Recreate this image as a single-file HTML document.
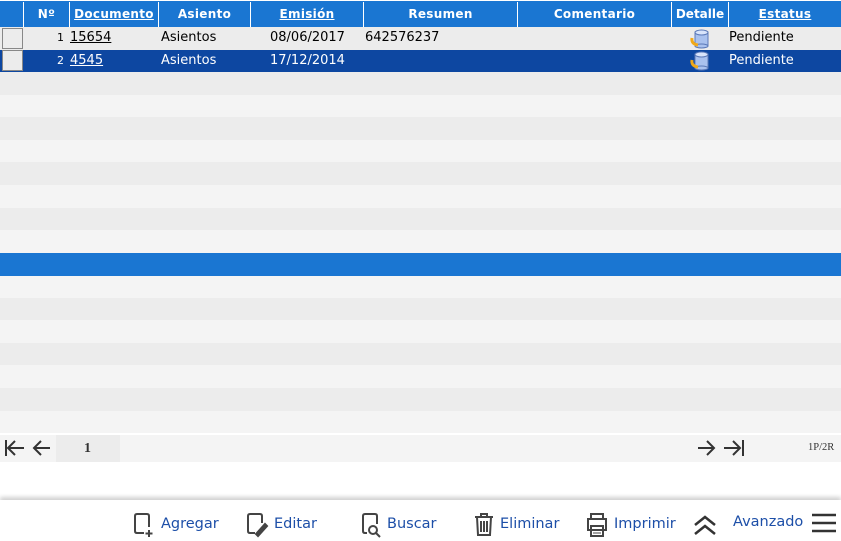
<!DOCTYPE html>
<html><head><meta charset="utf-8"><style>
*{margin:0;padding:0;box-sizing:border-box}
body{width:841px;height:541px;overflow:hidden;background:#fff;font-family:"DejaVu Sans","Liberation Sans",sans-serif;position:relative}
.hdr{position:absolute;top:0;left:0;width:841px;height:27px;background:#1a76d2;border-top:1px solid #fff}
.hc{position:absolute;top:1px;height:25px;line-height:24px;color:#fff;font-weight:bold;font-size:12px;letter-spacing:0.3px;text-align:center;border-left:1px solid #fff}
.hc u{text-decoration:underline}
.row{position:absolute;left:0;width:841px}
.c{position:absolute;font-size:13px;line-height:22px;color:#000;white-space:nowrap}
.cb{position:absolute;left:2px;width:21px;height:21px;background:#ececec;border:1px solid #888}
.sel .c{color:#fff}
.ft{position:absolute;top:500px;left:0;width:841px;height:41px;background:#fff;box-shadow:0 -3px 4px rgba(0,0,0,.18)}
.btn{position:absolute;top:514px;font-family:"DejaVu Sans",sans-serif;font-size:14.5px;color:#1d4fa8;line-height:20px}
svg{position:absolute}
</style></head><body>
<div class="hdr">
<div class="hc" style="left:23px;width:46px">Nº</div>
<div class="hc" style="left:69px;width:89px"><u>Documento</u></div>
<div class="hc" style="left:158px;width:92px">Asiento</div>
<div class="hc" style="left:250px;width:113px"><u>Emisión</u></div>
<div class="hc" style="left:363px;width:154px">Resumen</div>
<div class="hc" style="left:517px;width:154px">Comentario</div>
<div class="hc" style="left:671px;width:57px;letter-spacing:0">Detalle</div>
<div class="hc" style="left:728px;width:113px"><u>Estatus</u></div>
</div>
<div class="row" style="top:27px;height:23px;background:#ececec">
<div class="cb" style="top:1px"></div>
<div class="c" style="left:57px;font-size:11px">1</div>
<div class="c" style="left:70px"><u>15654</u></div>
<div class="c" style="left:161px">Asientos</div>
<div class="c" style="left:270px">08/06/2017</div>
<div class="c" style="left:365px">642576237</div>
<div class="c" style="left:729px">Pendiente</div>
</div>
<div class="row sel" style="top:50px;height:22px;background:#0d47a1">
<div class="cb" style="top:0px"></div>
<div class="c" style="left:57px;font-size:11px">2</div>
<div class="c" style="left:70px"><u>4545</u></div>
<div class="c" style="left:161px">Asientos</div>
<div class="c" style="left:270px">17/12/2014</div>
<div class="c" style="left:729px">Pendiente</div>
</div>
<svg style="left:689px;top:29px" width="22" height="20" viewBox="0 0 22 20"><rect x="6" y="3" width="13" height="14" fill="#a9c1ee" stroke="#5b79b8"/><ellipse cx="12.5" cy="3.5" rx="6.5" ry="2.5" fill="#d8e4fb" stroke="#5b79b8"/><ellipse cx="12.5" cy="17" rx="6.5" ry="2" fill="#a9c1ee" stroke="#5b79b8"/><path d="M3 9 Q2 15 9 16" stroke="#f0a818" stroke-width="3" fill="none"/></svg>
<svg style="left:689px;top:51px" width="22" height="20" viewBox="0 0 22 20"><rect x="6" y="3" width="13" height="14" fill="#a9c1ee" stroke="#5b79b8"/><ellipse cx="12.5" cy="3.5" rx="6.5" ry="2.5" fill="#d8e4fb" stroke="#5b79b8"/><ellipse cx="12.5" cy="17" rx="6.5" ry="2" fill="#a9c1ee" stroke="#5b79b8"/><path d="M3 9 Q2 15 9 16" stroke="#f0a818" stroke-width="3" fill="none"/></svg>
<div class="row" style="top:72px;height:23px;background:#ececec"></div>
<div class="row" style="top:95px;height:22px;background:#f4f4f4"></div>
<div class="row" style="top:117px;height:23px;background:#ececec"></div>
<div class="row" style="top:140px;height:22px;background:#f4f4f4"></div>
<div class="row" style="top:162px;height:23px;background:#ececec"></div>
<div class="row" style="top:185px;height:23px;background:#f4f4f4"></div>
<div class="row" style="top:208px;height:22px;background:#ececec"></div>
<div class="row" style="top:230px;height:23px;background:#f4f4f4"></div>
<div class="row" style="top:253px;height:23px;background:#1a76d2"></div>
<div class="row" style="top:276px;height:22px;background:#f4f4f4"></div>
<div class="row" style="top:298px;height:22px;background:#ececec"></div>
<div class="row" style="top:320px;height:23px;background:#f4f4f4"></div>
<div class="row" style="top:343px;height:22px;background:#ececec"></div>
<div class="row" style="top:365px;height:23px;background:#f4f4f4"></div>
<div class="row" style="top:388px;height:23px;background:#ececec"></div>
<div class="row" style="top:411px;height:22px;background:#f4f4f4"></div>
<div class="row" style="top:435px;height:27px;background:#f4f4f4"></div>
<div style="position:absolute;left:56px;top:435px;width:64px;height:27px;background:#ececec;font-family:'Liberation Serif',serif;font-size:14px;font-weight:bold;line-height:28px;padding-left:28px;color:#333">1</div>
<svg style="left:4px;top:438px" width="50" height="20" viewBox="0 0 50 20" fill="none" stroke="#333" stroke-width="2"><path d="M2 2V18M4 10H20M11 3L4 10L11 17"/><path d="M30 10H46M37 3L30 10L37 17"/></svg>
<svg style="left:696px;top:438px" width="50" height="20" viewBox="0 0 50 20" fill="none" stroke="#333" stroke-width="2"><path d="M2 10H18M11 3L18 10L11 17"/><path d="M28 10H44M37 3L44 10L37 17M47 2V18"/></svg>
<div style="position:absolute;left:808px;top:442px;font-family:'Liberation Serif',serif;font-size:10.5px;color:#333">1P/2R</div>
<div class="ft"></div>
<svg style="left:133px;top:512px" width="24" height="26" viewBox="0 0 24 26" fill="none" stroke="#444" stroke-width="2"><path d="M11 21H4Q2 21 2 19V4Q2 2 4 2H14Q16 2 16 4V15"/><path d="M16 18V25M12.5 21.5H19.5"/></svg>
<div class="btn" style="left:161px">Agregar</div>
<svg style="left:246px;top:512px" width="26" height="26" viewBox="0 0 26 26" fill="none" stroke="#444" stroke-width="2"><path d="M9 21H4Q2 21 2 19V4Q2 2 4 2H14Q16 2 16 4V11"/><path d="M10 22L19 12L21 14L12 24Z" fill="#444"/></svg>
<div class="btn" style="left:274px">Editar</div>
<svg style="left:361px;top:512px" width="26" height="26" viewBox="0 0 26 26" fill="none" stroke="#444" stroke-width="2"><path d="M6 21H4Q2 21 2 19V4Q2 2 4 2H14Q16 2 16 4V12"/><circle cx="12" cy="18" r="4"/><path d="M15 21L19 25"/></svg>
<div class="btn" style="left:387px">Buscar</div>
<svg style="left:473px;top:512px" width="22" height="26" viewBox="0 0 22 26" fill="none" stroke="#444" stroke-width="2"><path d="M2 5H20M8 5V2H14V5M4 5L5 23H17L18 5M8 9V20M11 9V20M14 9V20"/></svg>
<div class="btn" style="left:500px">Eliminar</div>
<svg style="left:585px;top:512px" width="24" height="26" viewBox="0 0 24 26" fill="none" stroke="#444" stroke-width="2"><path d="M6 7V2H18V7M3 7H21V18H3ZM6 14H18V24H6Z"/><path d="M8 18H16M8 21H16" stroke-width="1"/></svg>
<div class="btn" style="left:614px">Imprimir</div>
<svg style="left:692px;top:514px" width="26" height="22" viewBox="0 0 26 22" fill="none" stroke="#333" stroke-width="2.5"><path d="M3 11L13 3L23 11M3 20L13 12L23 20"/></svg>
<div class="btn" style="left:733px;top:512px">Avanzado</div>
<svg style="left:811px;top:513px" width="26" height="20" viewBox="0 0 26 20" stroke="#333" stroke-width="2.5"><path d="M1 2H25M1 10H25M1 18H25"/></svg>
</body></html>
